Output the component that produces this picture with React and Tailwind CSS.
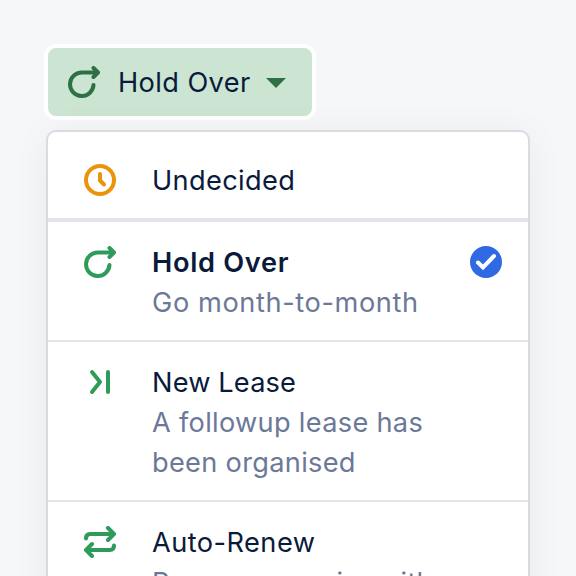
function Svg({ children, className = "" }) {
  return (
    <svg viewBox="0 0 32 32" className={`h-8 w-8 shrink-0 ${className}`} fill="none" stroke="currentColor" strokeWidth="4" strokeLinecap="round" strokeLinejoin="round">
      {children}
    </svg>
  );
}

const HoldOverIcon = ({ className }) => (
  <Svg className={className}>
    <path d="M25.5 18.9A11.75 11.75 0 1 1 13.75 6.5H29" />
    <path d="M25.5 2L30 6.5L25.5 11" />
  </Svg>
);

const ClockIcon = ({ className }) => (
  <Svg className={className}>
    <circle cx="16" cy="16" r="14" />
    <path d="M16 10V16.5L20 20.5" />
  </Svg>
);

const NewLeaseIcon = ({ className }) => (
  <Svg className={className}>
    <path d="M8 6L16 16L8 26M24 6V26" />
  </Svg>
);

const RenewIcon = ({ className }) => (
  <Svg className={className}>
    <path d="M2 12.5C2 9.5 3.5 8 6 8H29M24 2L30 8L24 14M30 19.5C30 22.5 28.5 24 26 24H3M8 18L2 24L8 30" />
  </Svg>
);

const options = [
  { title: "Undecided", Icon: ClockIcon, color: "text-[#ea930c]", row: "h-[90px] pt-7 border-b-4", titleClass: "tracking-[0.36px]" },
  {
    title: "Hold Over",
    Icon: HoldOverIcon,
    color: "text-[#2f9b5b]",
    lines: [["Go month-to-month", "tracking-[0.6px]"]],
    selected: true,
    row: "h-[120px] pt-5 border-b-2",
    titleClass: "font-semibold tracking-[0.7px]",
  },
  {
    title: "New Lease",
    Icon: NewLeaseIcon,
    color: "text-[#2f9b5b]",
    lines: [["A followup lease has been organised", "tracking-[0.3px]"]],
    row: "h-40 pt-5 border-b-2",
    titleClass: "tracking-[0.15px]",
  },
  {
    title: "Auto-Renew",
    Icon: RenewIcon,
    color: "text-[#2f9b5b]",
    lines: [["Renew on expiry with", "tracking-[0.3px]"]],
    row: "h-40 pt-5",
    titleClass: "tracking-[0.45px]",
  },
];

export default function App() {
  return (
    <main className="h-[576px] w-[576px] overflow-hidden bg-[#f6f7f9] pt-11 pl-11 font-['Inter',sans-serif] text-[27.2px] leading-10 text-[#0a1a3a]">
      <button className="flex h-[76px] w-[272px] items-center rounded-xl border-4 border-white bg-[#cce4d2] pl-5 text-left">
        <HoldOverIcon className="text-[#2d7044]" />
        <span className="ml-[18px] w-[132px] pt-px tracking-[0.4px] whitespace-nowrap">Hold Over</span>
        <svg viewBox="0 0 20 10" className="mt-0.5 ml-4 h-2.5 w-5 shrink-0 fill-[#2d7044]">
          <path d="M0 0H20L10 10Z" />
        </svg>
      </button>
      <ul className="mt-2.5 ml-0.5 h-[600px] w-[484px] overflow-hidden rounded-[10px] border-2 border-[#d9dbe1] bg-white shadow-[0_4px_36px_rgba(0,0,0,0.06)]">
        {options.map(({ title, Icon, color, lines = [], selected, row, titleClass }) => (
          <li key={title} className={`flex border-[#e3e4ea] pr-[26px] pl-9 ${row}`}>
            <Icon className={`mt-1 ${color}`} />
            <div className="ml-9 w-[290px] pt-px">
              <p className={titleClass}>{title}</p>
              {lines.map(([text, tracking]) => (
                <p key={text} className={`text-[#6c7898] ${tracking}`}>{text}</p>
              ))}
            </div>
            {selected && (
              <svg viewBox="0 0 32 32" className="mt-1 ml-auto h-8 w-8 shrink-0" fill="none">
                <circle cx="16" cy="16" r="16" fill="#2f6ae4" />
                <path d="M8 16.5L13 21.5L24 10" stroke="white" strokeWidth="4" strokeLinecap="round" />
              </svg>
            )}
          </li>
        ))}
      </ul>
    </main>
  );
}
